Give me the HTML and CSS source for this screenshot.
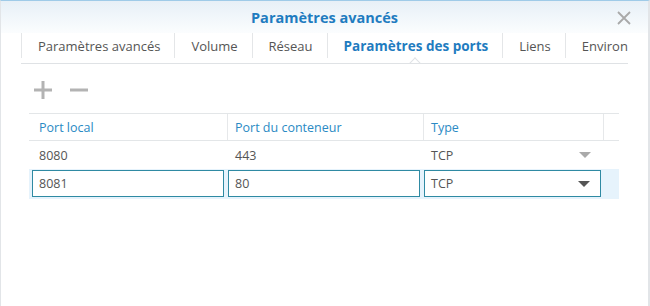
FILE: index.html
```html
<!DOCTYPE html>
<html lang="fr">
<head>
    <meta charset="UTF-8">
    <title>Paramètres avancés</title>
    <link rel="stylesheet" href="styles.css">
</head>
<body>
    <div class="window">
        <div class="titlebar">
            <span></span>
            <div class="title">Paramètres avancés</div>
            <div class="close">
                <svg width="14" height="14" viewBox="0 0 14 14"><path d="M1 1 L13 13 M13 1 L1 13" stroke="#a9a9a9" stroke-width="1.8" fill="none"/></svg>
            </div>
        </div>

        <div class="tabs">
            <div class="tab">Paramètres avancés</div>
            <div class="tab">Volume</div>
            <div class="tab">Réseau</div>
            <div class="tab active">Paramètres des ports</div>
            <div class="tab">Liens</div>
            <div class="tab">Environnement</div>
        </div>

        <!-- add / remove -->
        <div class="toolbar">
            <svg width="20" height="20" viewBox="0 0 20 20"><path d="M10 1 V19 M1 10 H19" stroke="#b3b3b3" stroke-width="3"/></svg>
            <svg width="20" height="20" viewBox="0 0 20 20"><path d="M1 10 H19" stroke="#b3b3b3" stroke-width="3"/></svg>
        </div>

        <div class="grid">
            <div class="row head">
                <div class="cell">Port local</div>
                <div class="cell">Port du conteneur</div>
                <div class="cell">Type</div>
                <div class="cell last"></div>
            </div>
            <div class="row">
                <div class="cell">8080</div>
                <div class="cell">443</div>
                <div class="cell select">TCP <span class="arrow light"></span></div>
                <div class="cell last"></div>
            </div>
            <div class="row editing">
                <div class="cell"><div class="field">8081</div></div>
                <div class="cell"><div class="field">80</div></div>
                <div class="cell"><div class="field select">TCP <span class="arrow"></span></div></div>
                <div class="cell last"></div>
            </div>
        </div>
    </div>
</body>
</html>
```

FILE: styles.css
```css
body {
    margin: 0;
    font-family: "Open Sans", "Noto Sans", sans-serif;
    font-size: 12.5px;
    color: #555;
    background: #fff;
}

.window {
    width: 650px;
    height: 306px;
    box-sizing: border-box;
    border-top: 1px solid #9fcbe8;
    border-left: 1px solid #e2e5e8;
    border-right: 2px solid #e2e5e8;
    overflow: hidden;
}

.titlebar {
    height: 32px;
    display: grid;
    grid-template-columns: 1fr auto 1fr;
    align-items: center;
    background: linear-gradient(#e7f0f7, #fbfdfe);
}

.title {
    font-weight: bold;
    font-size: 14.5px;
    color: #1f7cc0;
}

.close {
    justify-self: end;
    margin-right: 17px;
    display: flex;
    padding-top: 1px;
}

.tabs {
    display: flex;
    margin: 0 20px;
    height: 30px;
    border-bottom: 1px solid #dfe2e5;
    overflow: hidden;
    white-space: nowrap;
    position: relative;
    font-size: 13px;
}

.tab {
    display: flex;
    align-items: center;
    padding: 0 14px 0 16px;
    border-left: 1px solid #e4e6e8;
    margin: 0 0 5px 0;
    color: #555;
    position: relative;
}

.tab.active {
    font-weight: bold;
    font-size: 13.5px;
    color: #1f7cc0;
}

.tab.active::after {
    content: "";
    position: absolute;
    left: 50%;
    bottom: -9px;
    width: 7px;
    height: 7px;
    margin-left: -4px;
    background: #fff;
    border-left: 1px solid #dfe2e5;
    border-top: 1px solid #dfe2e5;
    transform: rotate(45deg);
}

.toolbar {
    height: 49px;
    display: flex;
    align-items: center;
    gap: 16px;
    padding-left: 32px;
    padding-top: 2px;
    box-sizing: border-box;
}

.grid {
    margin-left: 28px;
    width: 590px;
}

.row {
    display: grid;
    grid-template-columns: 198px 196px 180px 16px;
    height: 28px;
}

.row.head {
    height: 26px;
    border-top: 1px solid #e3e6e8;
    border-bottom: 1px solid #e3e6e8;
    color: #2a8ac4;
}

.row.head .cell + .cell {
    border-left: 1px solid #e6e8ea;
}

.cell {
    display: flex;
    align-items: center;
    padding-left: 10px;
}

.row.head .cell + .cell {
    padding-left: 7px;
}

.row .cell + .cell {
    padding-left: 8px;
}

.cell.last {
    padding: 0;
}

.select {
    justify-content: space-between;
    padding-right: 12px;
}

.row.editing {
    height: 30px;
    background: #e6f3fc;
}

.row.editing .cell {
    padding: 0;
    align-items: flex-start;
    padding-top: 1px;
}

.row.editing .cell:first-child {
    padding-left: 3px;
}

.row.editing .cell:nth-child(2) {
    padding-left: 1px;
}

.row.editing .cell:nth-child(3) {
    padding-left: 1px;
}

.field {
    box-sizing: border-box;
    width: 192px;
    height: 27px;
    border: 1px solid #2f8aa3;
    background: #fff;
    display: flex;
    align-items: center;
    padding-left: 6px;
}

.row.editing .cell:nth-child(3) .field {
    width: 177px;
    padding-right: 10px;
}

.arrow {
    width: 0;
    height: 0;
    border-left: 6px solid transparent;
    border-right: 6px solid transparent;
    border-top: 6px solid #555;
}

.arrow.light {
    border-top-color: #aaa;
}
```
